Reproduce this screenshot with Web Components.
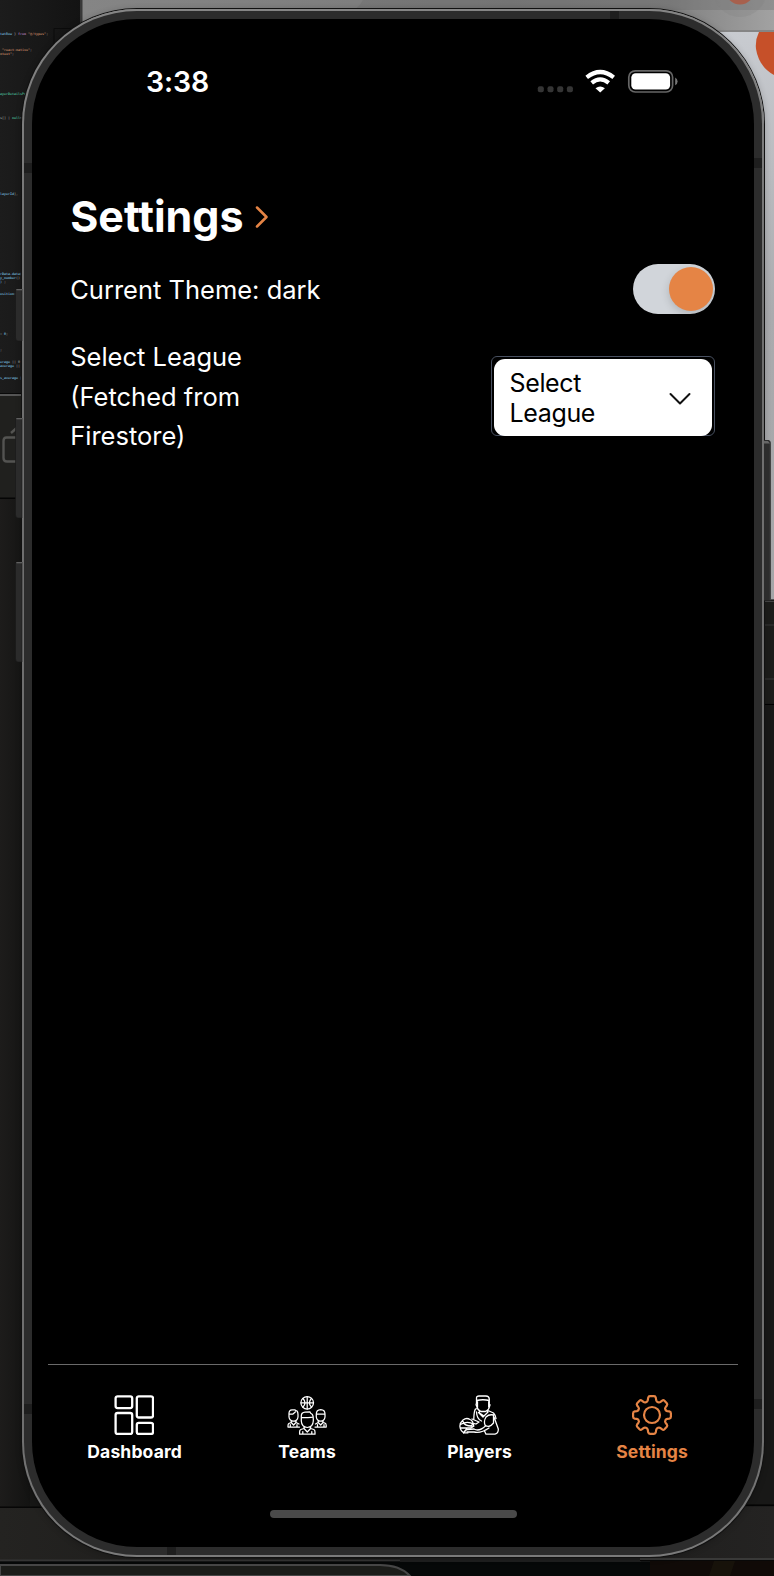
<!DOCTYPE html>
<html lang="en">
<head>
<meta charset="utf-8">
<title>Settings</title>
<style>
html,body{margin:0;padding:0;background:#171716;overflow:hidden}
body{width:774px;height:1576px;font-family:Inter,"Liberation Sans",sans-serif;color:#fff}
</style>
</head>
<body>
<desk-top>
  <phone-frame>
    <status-bar></status-bar>
    <settings-page>
      <page-title>Settings</page-title>
      <setting-row><span>Current Theme: dark</span><theme-switch slot="control"></theme-switch></setting-row>
      <setting-row class="league"><span>Select League<br>(Fetched from<br>Firestore)</span><league-select slot="control">Select<br>League</league-select></setting-row>
    </settings-page>
    <tab-bar slot="footer">
      <tab-item icon="dashboard">Dashboard</tab-item>
      <tab-item icon="teams">Teams</tab-item>
      <tab-item icon="players">Players</tab-item>
      <tab-item icon="settings" active>Settings</tab-item>
    </tab-bar>
  </phone-frame>
</desk-top>
<script>
function define(name, html) {
  customElements.define(name, class extends HTMLElement {
    connectedCallback() {
      if (this.shadowRoot) return;
      this.attachShadow({mode: 'open'}).innerHTML = typeof html === 'function' ? html(this) : html;
    }
  });
}

const codeLines = [
  [34, 0, '<b class="v">tatRow</b> } <b class="p">from</b> <b class="o">"@/types"</b>;'],
  [49.5, 2, '<b class="o">"react-native"</b>;'],
  [53.5, 0, '<b class="o">ntext"</b>;'],
  [94, 0, '<b class="t">ayerDetailsPr</b>'],
  [117.5, 0, 's[] | <b class="t">null</b>&gt;'],
  [193.5, 0, '<b class="v">layerId</b>],'],
  [273.5, 0, '<b class="v">rData.data</b>('],
  [277.5, 0, '<b class="v">y_number</b>()'],
  [281.5, 0, '<b class="v">)</b> ;'],
  [293.5, 0, '<b class="v">osition</b>:'],
  [334, 0, '= <b class="v">0</b>;'],
  [350, 0, ';'],
  [361.5, 0, '<b class="v">erage</b> || 0'],
  [365.5, 0, '<b class="v">average</b> ||'],
  [378, 0, '<b class="v">s_average</b> |']
];

define('desk-top', `
<style>
:host{display:block;position:relative;width:774px;height:1576px;overflow:hidden;background:#171716}
.bg{position:absolute;left:0;top:0;display:block}
.code{position:absolute;font:bold 3.33px/4px "DejaVu Sans Mono",monospace;color:#8d8d8d;white-space:pre}
.code b{font-weight:bold}.v{color:#6aa2c8}.p{color:#a574aa}.o{color:#bd7d5f}.t{color:#46a98b}
slot{position:absolute;display:block;left:22px;top:9px}
</style>
<svg class="bg" width="774" height="1576" viewBox="0 0 774 1576">
  <defs>
    <linearGradient id="a" x1="0" x2="1"><stop offset="0" stop-color="#858585"/><stop offset=".62" stop-color="#7a7a7a"/><stop offset=".85" stop-color="#808080"/><stop offset="1" stop-color="#a2a2a2"/></linearGradient>
    <linearGradient id="b" x1="0" y1="0" x2="0" y2="1"><stop offset="0" stop-color="#c8cbd0"/><stop offset=".5" stop-color="#aaabae"/><stop offset="1" stop-color="#a4a5a7"/></linearGradient>
    <linearGradient id="c" x1="0" x2="1"><stop offset="0" stop-color="#1d1c1b"/><stop offset="1" stop-color="#131312"/></linearGradient>
    <linearGradient id="d" x1="0" x2="1"><stop offset="0" stop-color="#1c1c1c"/><stop offset="1" stop-color="#131313"/></linearGradient>
    <linearGradient id="e" x1="0" x2="1"><stop offset="0" stop-color="#242321"/><stop offset=".5" stop-color="#171716"/><stop offset="1" stop-color="#242322"/></linearGradient>
  </defs>
  <rect width="82" height="395" fill="url(#d)"/>
  <path d="M54 60V28.500H82" fill="none" stroke="#0b0b0b"/>
  <rect x="82" width="692" height="34" fill="url(#a)"/>
  <path d="M363 0H774V10H354Q359 7 363 0" fill="#666" opacity=".3"/>
  <rect x="80" width="2.500" height="30" fill="#383838"/>
  <circle cx="740" cy="-10" r="27" fill="#7e7e7e" opacity=".25"/><circle cx="740" cy="-10" r="14.500" fill="#a7604d"/>
  <rect x="700" y="32" width="74" height="568" fill="url(#b)"/>
  <rect x="700" y="30" width="74" height="2" fill="#858585"/>
  <path d="M774 32H759Q755 40 756 49Q759 67 774 75Z" fill="#c65029"/>
  <rect y="393" width="30" height="2" fill="#090909"/><rect y="394" width="30" height="2" fill="#555"/>
  <rect y="396" width="30" height="102" fill="#20201e"/>
  <path d="M20 437.500H6.500Q3.500 437.500 3.500 441V458Q3.500 461.500 7 461.500H20M11 433L20 425" fill="none" stroke="#535351" stroke-width="2.400"/>
  <rect y="497.500" width="30" height="1.500" fill="#050505"/>
  <rect y="499" width="30" height="1008" fill="url(#c)"/>
  <rect x="760" y="599.500" width="14" height="1.200" fill="#000"/>
  <rect x="760" y="600.700" width="14" height="103" fill="#1c1c1a"/>
  <rect x="760" y="600.700" width="14" height="1.300" fill="#444"/>
  <rect x="760" y="624" width="14" height="2" fill="#292928"/><rect x="760" y="678" width="14" height="2" fill="#292928"/>
  <rect x="760" y="704" width="14" height="1.500" fill="#000"/>
  <rect x="760" y="705" width="14" height="800" fill="#181817"/>
  <rect y="1506.500" width="774" height="54" fill="url(#e)"/>
  <rect y="1506.500" width="120" height="1.300" fill="#000"/>
  <rect x="650" y="1400" width="124" height="105" fill="#181817"/><rect x="650" y="1504.500" width="124" height="1.300" fill="#000"/>
  <rect y="1559.500" width="774" height="2" fill="#343434"/>
  <rect y="1561.500" width="774" height="15" fill="#060808"/>
  <path d="M0 1565H380Q400 1565 410 1576H0Z" fill="#1b1c19" stroke="#464646" stroke-width="2"/>
  <rect x="400" y="1557" width="241" height="5" fill="#1f1f1f"/>
  <rect x="640" y="1558" width="134" height="2" fill="#393938"/>
  <rect x="640" y="1560" width="134" height="1" fill="#080808"/>
  <rect x="650" y="1561" width="124" height="15" fill="#100a07"/><path d="M714 1561H735L730 1576H709Z" fill="#17120a"/>
</svg>
${codeLines.map(([y, x, t]) => `<div class="code" style="left:${x}px;top:${y - 2}px">${t}</div>`).join('')}
<slot></slot>`);

define('phone-frame', `
<style>
:host{display:block;position:relative;box-sizing:border-box;width:742px;height:1548px;padding:2px;border-radius:115px;background:linear-gradient(#858585,#6f6f6f 20%,#6f6f6f 92%,#7b7b7b);box-shadow:0 0 0 1px #111,0 1px 6px 1px rgba(0,0,0,.2)}
.keys{position:absolute;left:-7px;top:-9px;display:block}
.bezel{position:relative;box-sizing:border-box;height:1544px;padding:8px;border-radius:113px;background:#2c2c2c;overflow:hidden}
.band{position:absolute;background:#1e1e1e}
.screen{position:relative;display:flex;flex-direction:column;box-sizing:border-box;height:1528px;border-radius:105px;background:#000;padding:0 16px;overflow:hidden}
.body{flex:1}
</style>
<svg class="keys" width="757" height="700" viewBox="15 0 757 700">
  <g fill="#2b2b2b" stroke="#181818" stroke-width=".6"><path d="M22 289H17Q15.500 289 15.500 291V338Q15.500 341 18 341H22Z"/><path d="M22 418H17Q15.500 418 15.500 420V515Q15.500 518 18 518H22Z"/><path d="M22 562H17Q15.500 562 15.500 564V659Q15.500 662 18 662H22Z"/></g>
  <g fill="#606060"><rect x="16.300" y="289" width="5.700" height="1.300"/><rect x="16.300" y="418" width="5.700" height="1.300"/><rect x="16.300" y="562" width="5.700" height="1.300"/></g>
  <path d="M764 440H769Q771 441 771 444V600.500H764Z" fill="#2c2c2c"/><path d="M764 441H768L770 443.500H764" fill="#666"/><path d="M770.300 443V600" stroke="#4a4a4a"/>
</svg>
<div class="bezel">
  <i class="band" style="left:0;top:152px;width:8px;height:10px"></i>
  <i class="band" style="right:0;top:147px;width:8px;height:10px"></i>
  <i class="band" style="left:586px;top:0;width:9px;height:8px"></i>
  <i class="band" style="left:0;top:1393px;width:8px;height:10px"></i>
  <i class="band" style="right:0;top:1388px;width:8px;height:10px"></i>
  <i class="band" style="left:143px;bottom:0;width:9px;height:8px"></i>
  <div class="screen"><div class="body"><slot></slot></div><slot name="footer"></slot></div>
</div>`);

define('status-bar', `
<style>
:host{display:flex;align-items:center;justify-content:space-between;box-sizing:border-box;height:125px;padding:0 60px 0 98px}
.time{font-size:28.5px;font-weight:600;line-height:34px;letter-spacing:-.1px}
svg{display:block}
</style>
<span class="time">3:38</span>
<svg width="142" height="26" viewBox="536 69 142 26">
  <g fill="#353535"><rect x="537.800" y="86.300" width="6" height="6" rx="2"/><rect x="547.500" y="86.300" width="6" height="6" rx="2"/><rect x="557.200" y="86.300" width="6" height="6" rx="2"/><rect x="566.900" y="86.300" width="6" height="6" rx="2"/></g>
  <g fill="none" stroke="#fff"><path d="M586.700 77.300Q600.200 66.700 613.700 77.300" stroke-width="4.200"/><path d="M591.700 82.800Q600.200 76 608.700 82.800" stroke-width="4.200"/></g>
  <path d="M595.500 88.200Q600.200 84.600 604.900 88.200L600.200 92.500Z" fill="#fff"/>
  <rect x="628.800" y="70.800" width="43.800" height="21.200" rx="6.500" fill="none" stroke="#666" stroke-width="1.700"/>
  <rect x="631.300" y="73.300" width="38.800" height="16.200" rx="4.300" fill="#fff"/>
  <path d="M675.200 77.600Q677.600 79 677.600 81.400T675.200 85.200Z" fill="#777"/>
</svg>`);

define('settings-page', `
<style>:host{display:block;padding:41px 23px 0 22.2px}</style><slot></slot>`);

define('page-title', `
<style>
:host{display:flex;align-items:center;height:62px;font-size:43px;font-weight:700;line-height:62px;letter-spacing:0}
svg{display:block;margin:1px 0 0 11px}
</style>
<slot></slot>
<svg width="14" height="22" viewBox="0 0 14 22"><path d="M2 1.500L11.500 11L2 20.500" fill="none" stroke="#e58445" stroke-width="2.500" stroke-linecap="round" stroke-linejoin="round"/></svg>`);

define('setting-row', `
<style>
:host{display:flex;align-items:center;justify-content:space-between;height:84.5px;font-size:25.5px;line-height:39.3px}
:host(.league){height:129.500px}
</style>
<slot></slot><slot name="control"></slot>`);

define('theme-switch', `
<style>
:host{display:flex;align-items:center;justify-content:flex-end;box-sizing:border-box;width:82px;height:50px;padding-right:2.500px;border-radius:25px;background:#d1d5da}
i{width:44px;height:44px;border-radius:50%;background:#e58445;box-shadow:0 3px 8px rgba(0,0,0,.16)}
</style><i></i>`);

define('league-select', `
<style>
:host{display:block;box-sizing:border-box;width:224.500px;height:80px;padding:2px 2px 0;border:1px solid #485060;border-radius:6px}
.box{display:flex;align-items:center;justify-content:space-between;box-sizing:border-box;height:77px;padding:1px 21px 0 16px;background:#fff;color:#000;border-radius:11px;font-size:25px;line-height:30.5px;letter-spacing:-.35px}
svg{display:block;margin-top:1px}
</style>
<div class="box"><span><slot></slot></span>
<svg width="22" height="14" viewBox="0 0 22 14"><path d="M1.500 2L11 11.500L20.500 2" fill="none" stroke="#111" stroke-width="2" stroke-linecap="round" stroke-linejoin="round"/></svg></div>`);

define('tab-bar', `
<style>
:host{display:block;height:183px;position:relative}
nav{display:grid;grid-template-columns:repeat(4,1fr);border-top:1px solid #6a6a6a;height:145px}
.home{width:247px;height:8px;border-radius:4px;background:#4a4a4a;margin:0 auto}
</style>
<nav><slot></slot></nav><div class="home"></div>`);

const icons = {
  dashboard: '<g stroke-width="2.300"><rect x="1.600" y="1.300" width="16.600" height="11.800" rx="2"/><rect x="22.800" y="1.300" width="16.200" height="21.200" rx="2"/><rect x="1.600" y="18" width="16.600" height="21" rx="2"/><rect x="22.800" y="27.800" width="16.200" height="11.200" rx="2"/></g>',
  teams: '<g stroke-width="1.250"><circle cx="20.200" cy="7.800" r="6.300"/><path d="M20.200 1.500V14M14 7.800H26.500M16 3.500Q20 7.800 16 12M24.400 3.500Q20.400 7.800 24.400 12"/><path d="M14.300 24V21Q14.300 17.500 18 17.200L23 16.800Q23.200 18.500 24.800 19Q26.300 20 26.300 24V26Q26 32 20.300 32.500Q14.600 32 14.300 26ZM14.300 22.500H21Q24.500 22.500 26.300 22M17 31.500V33.500L13.800 34.500Q12.600 35 12.600 37V39.200H28V37Q28 35 26.800 34.500L23.600 33.500V31.500M17 33.500L20.300 37L23.600 33.500M15.800 36.500V39M24.800 36.500V39"/><path d="M2 18.500Q2 15 5 14.800H8Q8.500 15.500 10 16Q11 17 11 19.500V22Q10.500 26 6.600 26Q2.500 26 2 22ZM2 19H6L8.500 16.800M4.200 25.500V27.500L1.800 28.500Q1 29 1 31V32H12.500M9 25.500V27.500L12 29M4.200 27.500L6.600 30L9 27.500M3.300 29.500V32M10 29.500V32"/><path d="M29.300 19Q29.300 14.800 33.700 14.600Q38 14.800 38 19V22Q37.500 26 33.700 26Q29.800 26 29.300 22ZM29.300 19H38M31.200 25.500V27.500L28.500 29M28 32H39.200V30.500Q39.200 28.500 38 28.200L36 27.500V25.500M31.200 27.500L33.700 30L36 27.500M30.500 29.500V32M37 29.500V32"/></g>',
  players: '<g stroke-width="1.300"><path d="M17.500 5V3Q17.500 1 20 1H27Q30 1 30.300 4V9Q31.500 9.500 30.500 11.500Q30 15 26.500 16.500H22Q18.500 15 17.800 11.500Q16.500 9.500 17.500 8.500ZM17.500 5.500Q24 4 30.300 5.500M18.500 6V12M29.700 6V12M20.500 16V18L25 21L28.500 17.500V16M18 13.500L16.500 14Q15 16 14.800 24M19.500 17.500L24 22L29 17M29 15.500L34.500 18Q36.500 20 37 23.500M17.500 17Q17.800 24 22.500 26M34.500 20Q30 19 27 22Q24.500 26 26 30Q30 33.500 34.500 28Q34.500 25 34.500 20M35 22L39.300 34Q39.500 38 36 39.200H27L25.500 36M26.500 31Q20 37 15 34L8 34.500Q5 36 4.500 38M30 33Q22 38.500 15 37H8M13 24L20 27L17 29Q14 27.500 12 31"/><path d="M14.500 31Q14.500 26 11 24.500Q7.500 22.200 4 25Q.500 28 1 32Q1.500 36.500 5.500 37.800H9M1.500 29.500Q8 25.500 14.500 29M1.500 33H12L15 31M4 26.500Q5 31 13 31M8 33L5.500 37"/></g>',
  settings: '<g stroke-width="2.200"><circle cx="20" cy="20" r="8"/><path d="M16.200 2.700Q16.500 1.200 18 1.200H22Q23.500 1.200 23.800 2.700L24.200 5.200Q24.600 6.600 26 7.200Q27.400 7.700 28.500 6.900L30.200 5.600Q31.400 4.800 32.500 5.800L34.800 8.200Q35.700 9.300 34.900 10.500L33.600 12.200Q32.700 13.300 33.300 14.500Q33.800 15.800 35.200 16.100L37.300 16.400Q38.900 16.700 38.900 18.200V21.800Q38.900 23.300 37.300 23.600L35.200 23.900Q33.800 24.200 33.300 25.500Q32.700 26.700 33.600 27.800L34.900 29.500Q35.700 30.700 34.800 31.800L32.500 34.200Q31.400 35.200 30.200 34.400L28.500 33.100Q27.400 32.300 26 32.800Q24.600 33.400 24.200 34.800L23.800 37.300Q23.500 38.800 22 38.800H18Q16.500 38.800 16.200 37.300L15.800 34.800Q15.400 33.400 14 32.800Q12.600 32.300 11.500 33.100L9.800 34.400Q8.600 35.200 7.500 34.200L5.200 31.800Q4.300 30.700 5.100 29.500L6.400 27.800Q7.300 26.700 6.700 25.500Q6.200 24.200 4.800 23.900L2.700 23.600Q1.100 23.300 1.100 21.800V18.200Q1.100 16.700 2.700 16.400L4.800 16.100Q6.200 15.800 6.700 14.500Q7.300 13.300 6.400 12.200L5.100 10.500Q4.300 9.300 5.200 8.200L7.500 5.800Q8.600 4.800 9.800 5.600L11.500 6.900Q12.600 7.700 14 7.200Q15.400 6.600 15.800 5.200Z"/></g>'
};

define('tab-item', el => `
<style>
:host{display:flex;flex-direction:column;align-items:center;padding-top:30px;color:#fff;font-size:17.5px;font-weight:700;line-height:24px;letter-spacing:.15px}
:host([active]){color:#e58445}
svg{display:block;fill:none;stroke:currentColor;stroke-linecap:round;stroke-linejoin:round;margin-bottom:5px}
span{padding-left:.8px}
</style>
<svg width="40" height="40" viewBox="0 0 40 40">${icons[el.getAttribute('icon')]}</svg>
<span><slot></slot></span>`);
</script>
</body>
</html>
